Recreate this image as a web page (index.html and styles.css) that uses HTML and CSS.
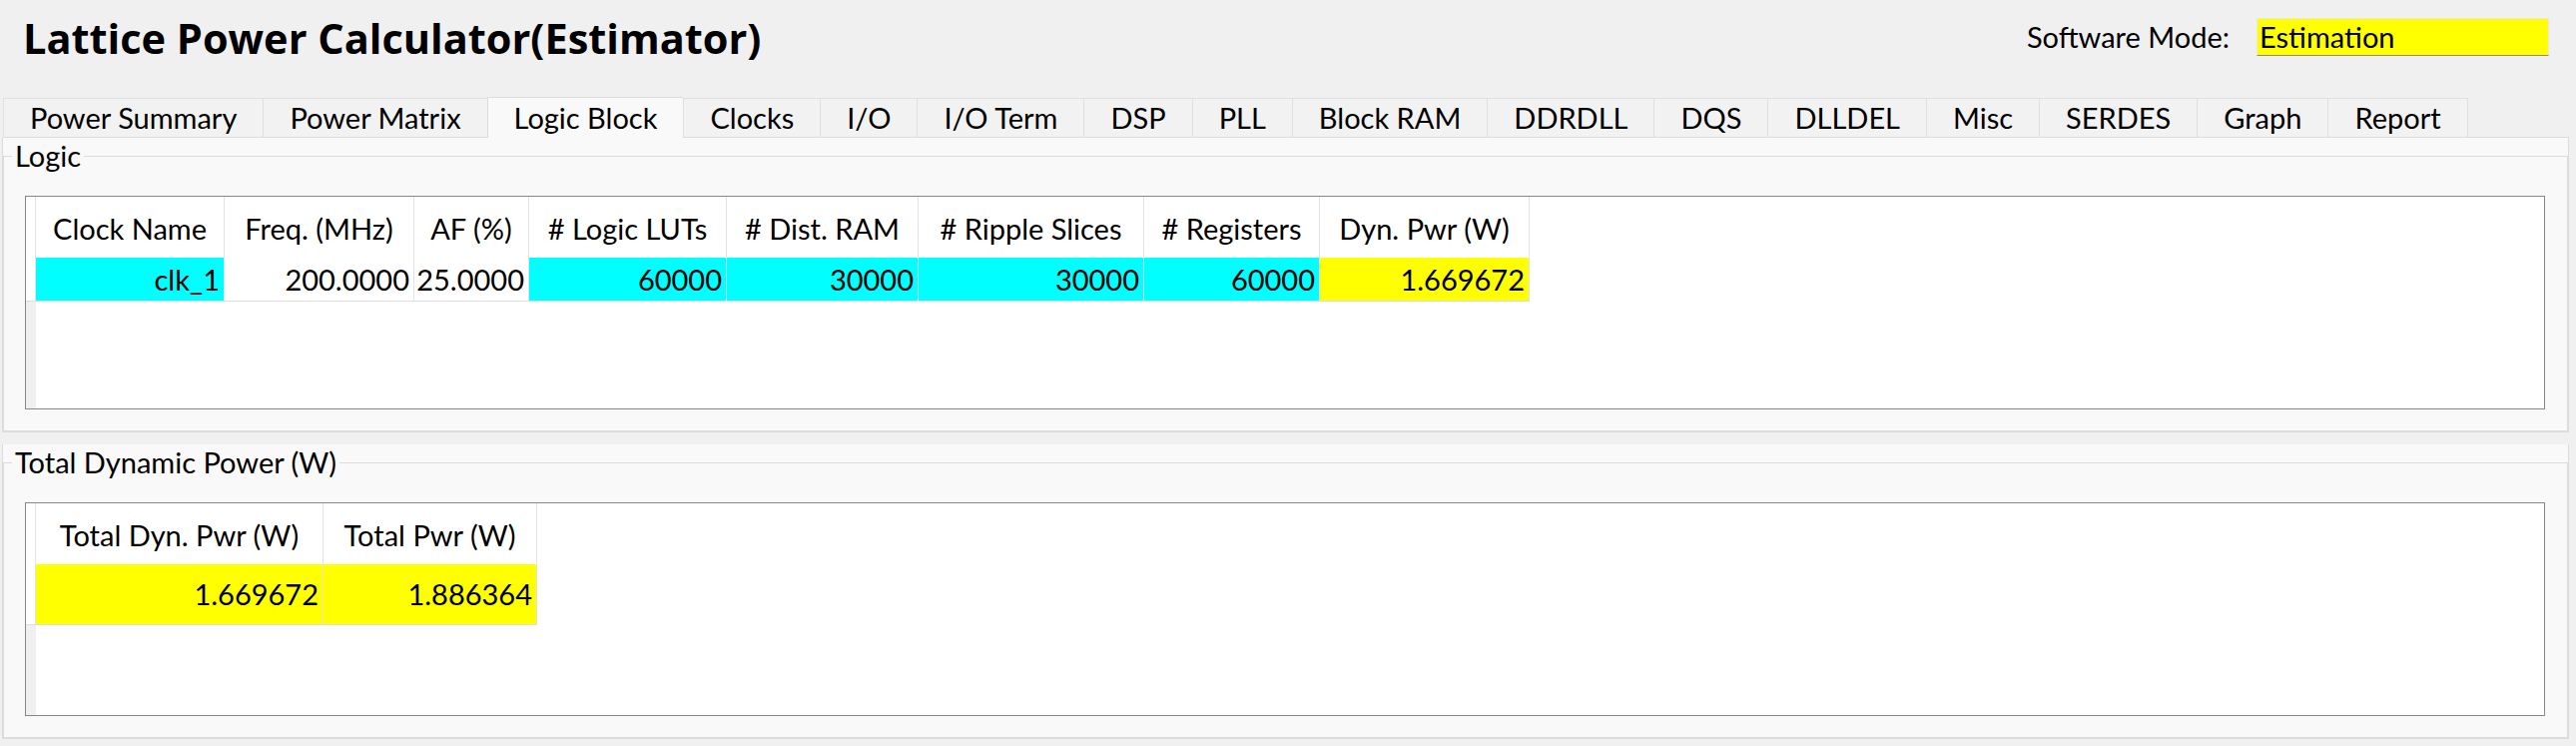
FILE: index.html
```html
<!DOCTYPE html>
<html lang="en">
<head>
<meta charset="utf-8">
<title>Lattice Power Calculator(Estimator)</title>
<link rel="stylesheet" href="styles.css">
</head>
<body>
<header class="topbar">
  <h1 class="app-title">Lattice Power Calculator(Estimator)</h1>
  <div class="mode">
    <span class="mode-label">Software Mode:</span>
    <span class="mode-value">Estimation</span>
  </div>
</header>
<nav class="tabs">
  <span class="tab">Power Summary</span>
  <span class="tab">Power Matrix</span>
  <span class="tab tab-active">Logic Block</span>
  <span class="tab">Clocks</span>
  <span class="tab">I/O</span>
  <span class="tab">I/O Term</span>
  <span class="tab">DSP</span>
  <span class="tab">PLL</span>
  <span class="tab">Block RAM</span>
  <span class="tab">DDRDLL</span>
  <span class="tab">DQS</span>
  <span class="tab">DLLDEL</span>
  <span class="tab">Misc</span>
  <span class="tab">SERDES</span>
  <span class="tab">Graph</span>
  <span class="tab tab-last">Report</span>
  <span class="tab-fill"></span>
</nav>
<section class="pane">
  <fieldset class="group">
    <legend class="group-title">Logic</legend>
    <div class="grid-frame">
      <div class="grid grid-logic">
        <div class="hcell corner"></div>
        <div class="hcell">Clock Name</div>
        <div class="hcell">Freq. (MHz)</div>
        <div class="hcell">AF (%)</div>
        <div class="hcell"># Logic LUTs</div>
        <div class="hcell"># Dist. RAM</div>
        <div class="hcell"># Ripple Slices</div>
        <div class="hcell"># Registers</div>
        <div class="hcell">Dyn. Pwr (W)</div>
        <div class="rowhead"></div>
        <div class="cell cyan">clk_1</div>
        <div class="cell">200.0000</div>
        <div class="cell">25.0000</div>
        <div class="cell cyan">60000</div>
        <div class="cell cyan">30000</div>
        <div class="cell cyan">30000</div>
        <div class="cell cyan">60000</div>
        <div class="cell yellow">1.669672</div>
      </div>
      <div class="grid-empty"></div>
    </div>
  </fieldset>
</section>
<section class="pane pane-total">
  <fieldset class="group">
    <legend class="group-title">Total Dynamic Power (W)</legend>
    <div class="grid-frame">
      <div class="grid grid-total">
        <div class="hcell corner"></div>
        <div class="hcell">Total Dyn. Pwr (W)</div>
        <div class="hcell">Total Pwr (W)</div>
        <div class="rowhead"></div>
        <div class="cell yellow">1.669672</div>
        <div class="cell yellow">1.886364</div>
      </div>
      <div class="grid-empty"></div>
    </div>
  </fieldset>
</section>
</body>
</html>
```
FILE: styles.css
```css
* { box-sizing: border-box; }
html, body { margin: 0; padding: 0; }
body {
  width: 2580px;
  height: 747px;
  overflow: hidden;
  background: #f0f0f0;
  color: #000;
  font-family: Lato, "Noto Sans", sans-serif;
  font-size: 29px;
}

/* ---------- header ---------- */
.topbar {
  height: 97px;
  display: flex;
  justify-content: space-between;
  align-items: flex-start;
  padding: 0 27px 0 23px;
}
.app-title {
  margin: 13px 0 0;
  font-family: "Open Sans", Lato, sans-serif;
  font-size: 41.5px;
  line-height: 50px;
  font-weight: 700;
}
.mode {
  display: flex;
  align-items: center;
  margin-top: 18px;
}
.mode-label {
  line-height: 36px;
  margin-right: 27px;
}
.mode-value {
  width: 293px;
  height: 38px;
  line-height: 36px;
  padding-left: 2px;
  background: #ffff00;
  border: 1px solid #e8e8e8;
  border-bottom-color: #8a8a8a;
}

/* ---------- tabs ---------- */
.tabs {
  display: flex;
  align-items: flex-end;
  height: 41px;
  margin: 0 7px 0 3px;
}
.tab {
  height: 40px;
  line-height: 38px;
  padding: 0 26px;
  white-space: nowrap;
  background: #f2f2f2;
  border: 1px solid #e0e0e0;
  border-right: 0;
  border-bottom-color: #dcdcdc;
}
.tab-last { border-right: 1px solid #e0e0e0; }
.tab-active {
  height: 41px;
  padding-top: 1px;
  background: #f9f9f9;
  border-color: #dcdcdc;
  border-bottom: 0;
}
.tab-fill {
  flex: 1;
  height: 1px;
  border-bottom: 1px solid #dcdcdc;
}

/* ---------- panes / groups ---------- */
.pane {
  margin: 0 7px 0 2px;
  background: #f9f9f9;
  border: 1px solid #dcdcdc;
  border-top: 0;
}
.pane-total { margin-top: 12px; }
.group {
  margin: 0;
  min-width: 0;
  padding: 22px 22px 21px 21px;
  border: 1px solid #dcdcdc;
}
.group-title {
  margin-left: -13px;
  padding: 0 3px;
  line-height: 36px;
}

/* ---------- grid tables ---------- */
.grid-frame {
  height: 214px;
  display: flex;
  flex-direction: column;
  background: #fff;
  border: 1px solid #828790;
}
.grid {
  display: grid;
  justify-content: start;
}
.grid-logic {
  grid-template-columns: 10px 189px 190px 115px 198px 192px 226px 176px 210px;
  grid-template-rows: 61px 44px;
}
.grid-total {
  grid-template-columns: 10px 288px 214px;
  grid-template-rows: 61px 61px;
}
.hcell {
  background: #fff;
  border-right: 1px solid #e3e3e3;
  padding-top: 2px;
  line-height: 59px;
  text-align: center;
  white-space: nowrap;
}
.rowhead {
  background: #fff;
  border-right: 1px solid #e3e3e3;
  border-bottom: 1px solid #dcdcdc;
}
.cell {
  background: #fff;
  border-right: 1px solid #e3e3e3;
  border-bottom: 1px solid #dcdcdc;
  padding-right: 4px;
  line-height: 43px;
  text-align: right;
  white-space: nowrap;
}
.grid-total .cell { line-height: 60px; }
.cyan { background: #00ffff; }
.yellow { background: #ffff00; }
.grid-empty {
  flex: 1;
  border-left: 10px solid #f0f0f0;
}
```
